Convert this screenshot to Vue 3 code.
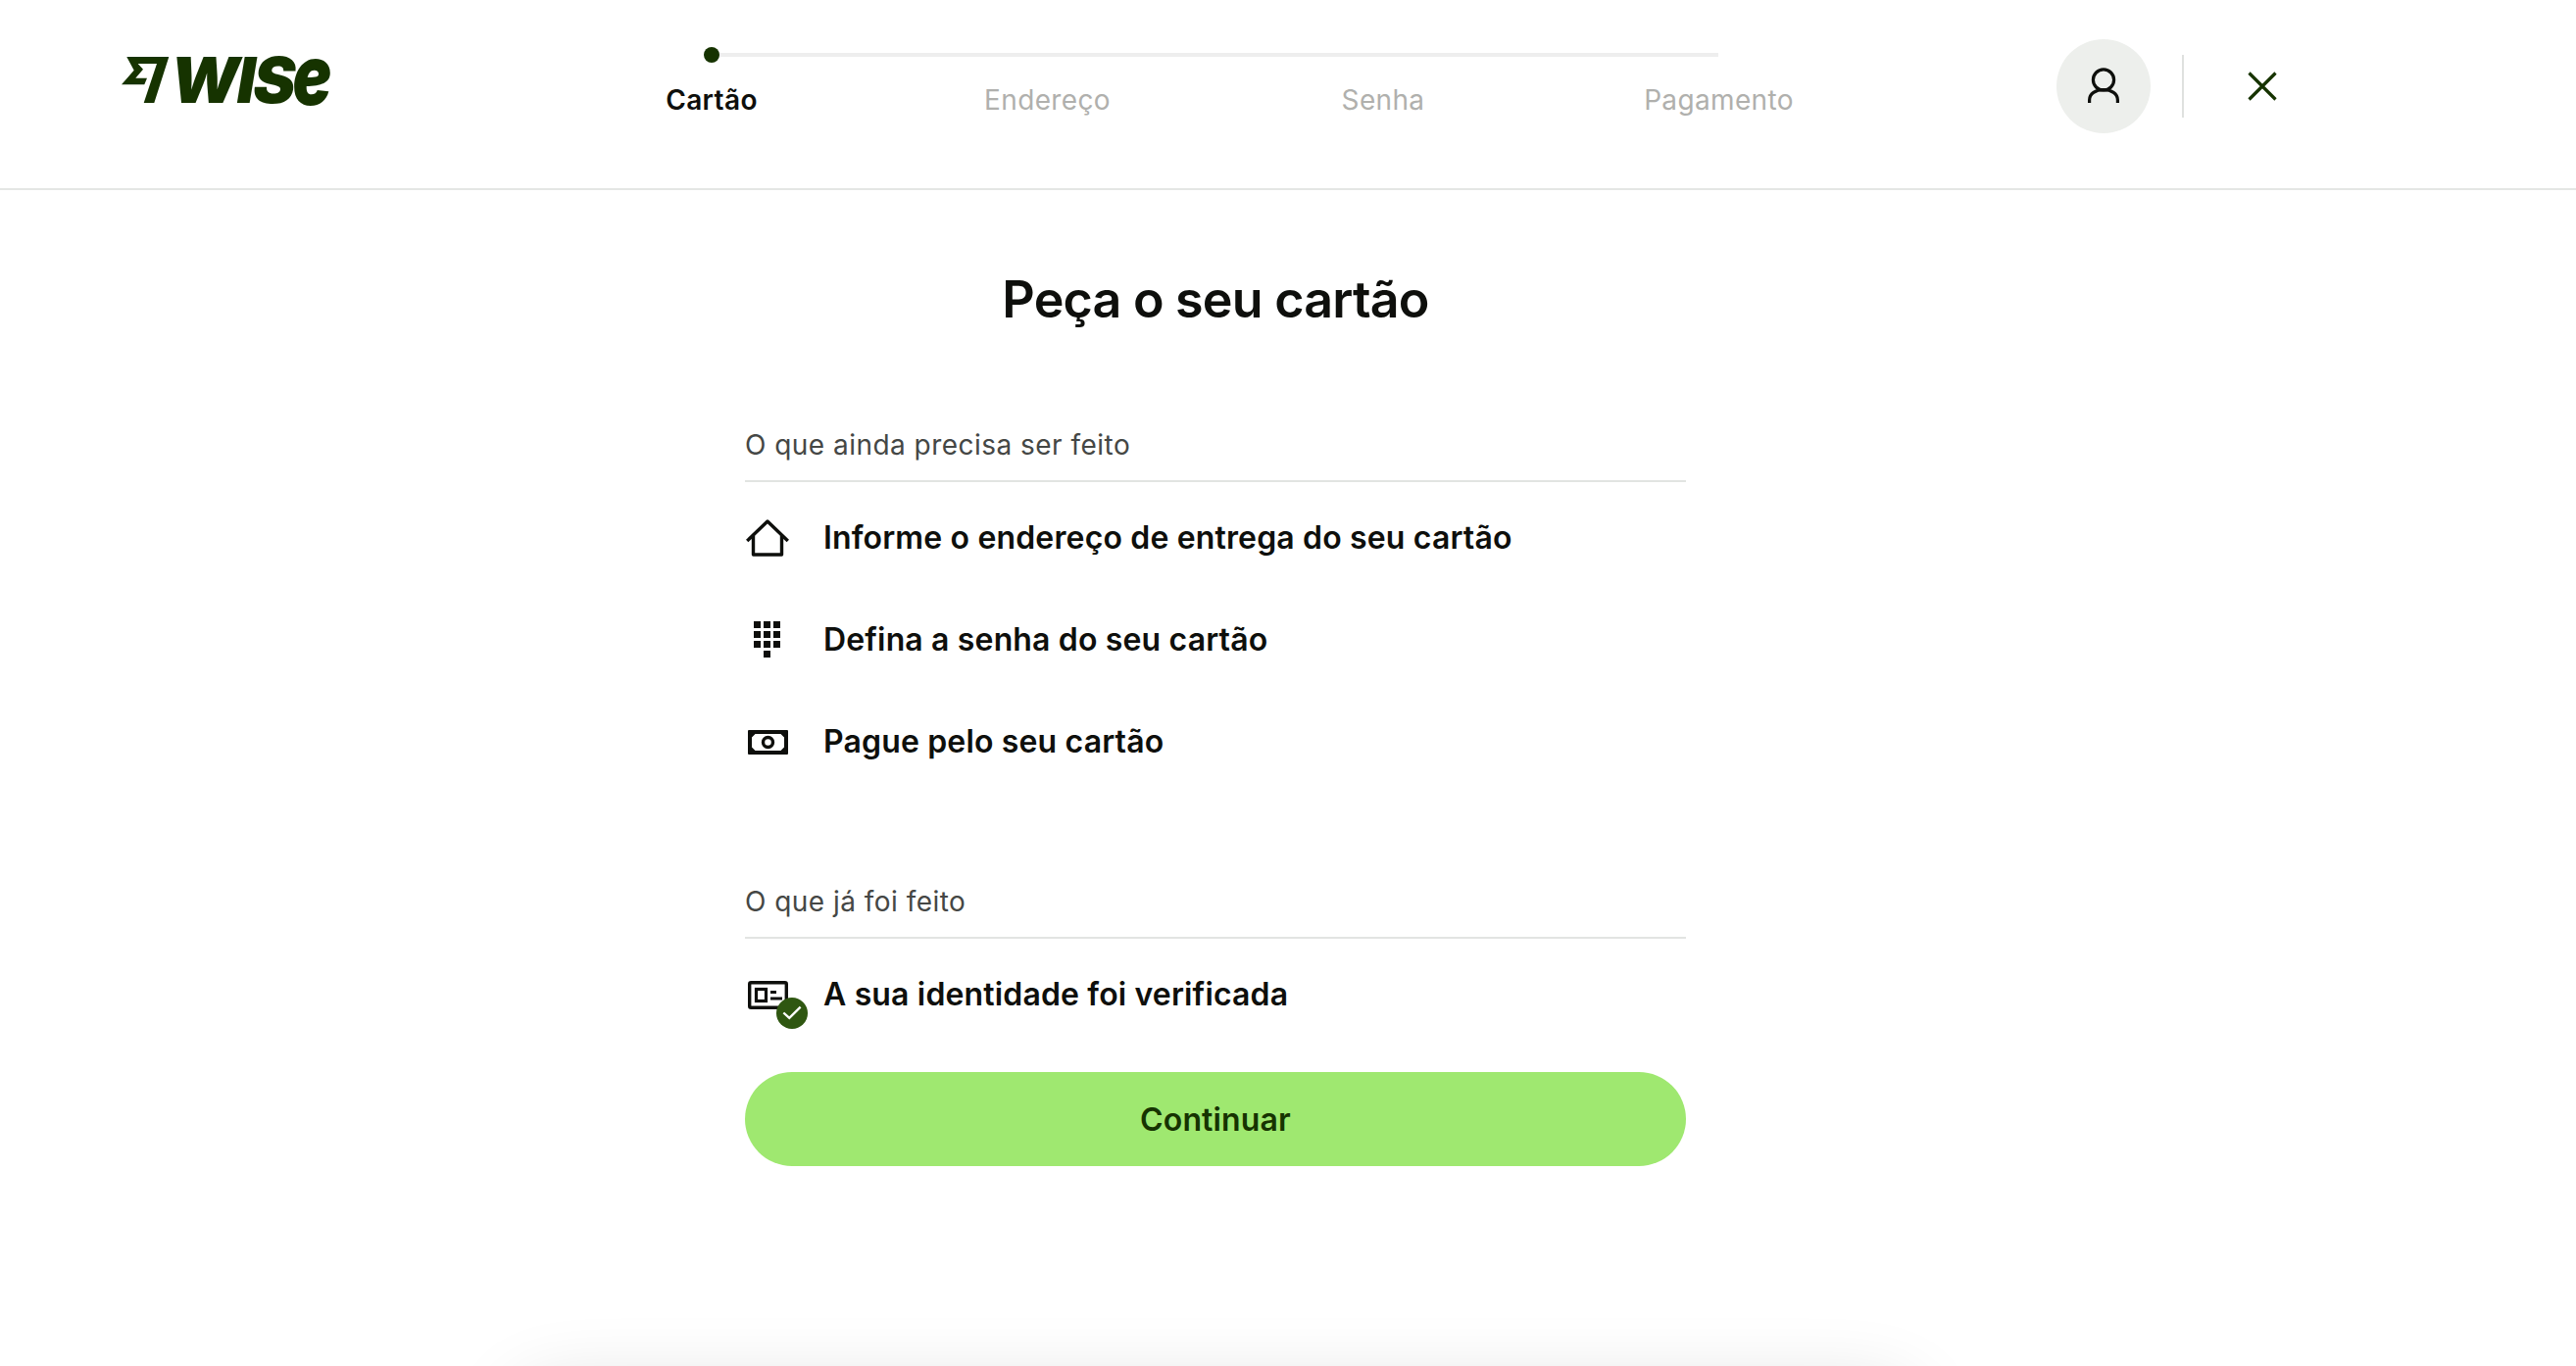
<script setup>
const todo = [
  { icon: 'home', text: 'Informe o endereço de entrega do seu cartão' },
  { icon: 'pad', text: 'Defina a senha do seu cartão' },
  { icon: 'cash', text: 'Pague pelo seu cartão' },
]
const steps = ['Cartão', 'Endereço', 'Senha', 'Pagamento']
const keys = [
  [0, 0], [10, 0], [20, 0],
  [0, 10], [10, 10], [20, 10],
  [0, 20], [10, 20], [20, 20],
  [10, 30],
]
</script>

<template>
  <div class="page">
    <header class="header">
      <div class="logo">
        <svg class="flag" width="49" height="47" viewBox="0 0 49 47">
          <path d="M5.3 0H48.3L33.3 47H22.7L36 7H16.7L22 12.7L14.3 21.7H26L23.3 28.3H0L12.7 13.7Z" fill="#163300" />
        </svg>
        <span class="wordmark">WIS<span class="wordmark-e">e</span></span>
      </div>
      <div class="stepper">
        <div class="track"><span class="dot"></span></div>
        <div class="labels">
          <span v-for="(s, i) in steps" :key="s" class="label" :class="{ active: i === 0 }">{{ s }}</span>
        </div>
      </div>
      <div class="actions">
        <div class="avatar">
          <svg width="32" height="38" viewBox="0 0 32 38" fill="none" stroke="#0e0f0c" stroke-width="3.2">
            <circle cx="16" cy="12.5" r="10.6" />
            <path d="M1.6 36V33C1.6 26.5 8 22.5 16 22.5S30.4 26.5 30.4 33V36" />
          </svg>
        </div>
        <span class="divider"></span>
        <svg class="close" width="30" height="30" viewBox="0 0 30 30" fill="none" stroke="#163300" stroke-width="3.2">
          <path d="M1.5 1.5L28.5 28.5M28.5 1.5L1.5 28.5" />
        </svg>
      </div>
    </header>

    <main class="main">
      <h1 class="title">Peça o seu cartão</h1>
      <section class="section">
        <h2 class="section-title">O que ainda precisa ser feito</h2>
        <ul class="list">
          <li v-for="item in todo" :key="item.icon" class="row">
            <span class="icon">
              <svg v-if="item.icon === 'home'" width="44" height="38" viewBox="0 0 44 38" fill="none" stroke="#0e0f0c" stroke-width="3.4">
                <path d="M1.2 22L22 2L42.8 22M7.5 16.5V36H36.5V16.5" stroke-linejoin="round" />
              </svg>
              <svg v-else-if="item.icon === 'pad'" width="28" height="38" viewBox="0 0 28 38" fill="#0e0f0c">
                <rect v-for="k in keys" :key="k.join()" :x="k[0]" :y="k[1]" width="7" height="7" />
              </svg>
              <svg v-else width="41" height="25" viewBox="0 0 41 25" fill="none">
                <path d="M1 0H40A1 1 0 0 1 41 1V24A1 1 0 0 1 40 25H1A1 1 0 0 1 0 24V1A1 1 0 0 1 1 0ZM7.5 4L4 7.5V17.5L7.5 21H33.5L37 17.5V7.5L33.5 4Z" fill="#0e0f0c" fill-rule="evenodd" />
                <circle cx="20.5" cy="12.5" r="5" stroke="#0e0f0c" stroke-width="3.4" />
              </svg>
            </span>
            <span class="row-text">{{ item.text }}</span>
          </li>
        </ul>
      </section>
      <section class="section done">
        <h2 class="section-title">O que já foi feito</h2>
        <ul class="list">
          <li class="row">
            <span class="icon">
              <svg class="id" width="41" height="29" viewBox="0 0 41 29" fill="none" stroke="#0e0f0c">
                <rect x="1.7" y="1.7" width="37.6" height="25.6" rx="1.5" stroke-width="3.4" />
                <rect x="8.5" y="8.5" width="10" height="12" stroke-width="3.2" />
                <path d="M23 11.5H29M23 18H35" stroke-width="3.2" />
              </svg>
              <span class="check">
                <svg width="20" height="15" viewBox="0 0 22 16" fill="none" stroke="#fff" stroke-width="2.6">
                  <path d="M1.5 8L8 14L20.5 1.5" />
                </svg>
              </span>
            </span>
            <span class="row-text">A sua identidade foi verificada</span>
          </li>
        </ul>
      </section>
      <button class="cta">Continuar</button>
    </main>
    <div class="peek"></div>
  </div>
</template>

<style scoped>
.page {
  position: relative;
  height: 1394px;
  overflow: hidden;
  background: #fff;
  font-family: Inter, "Liberation Sans", sans-serif;
  color: #0e0f0c;
}
.header {
  height: 192px;
  border-bottom: 2px solid #e4e6e4;
  display: flex;
  padding-left: 124px;
}
.logo {
  display: flex;
  align-items: flex-start;
  padding-top: 58px;
  gap: 1px;
  width: 502px;
  flex: none;
}
.flag {
  flex: none;
}
.wordmark {
  font-size: 65px;
  line-height: 47px;
  font-weight: 900;
  font-style: italic;
  color: #163300;
  letter-spacing: -2.5px;
}
.wordmark-e {
  display: inline-block;
  transform: scale(1.02, 1.3);
  transform-origin: 50% 85%;
  letter-spacing: 0;
}
.stepper {
  width: 1200px;
  flex: none;
  padding-top: 54px;
}
.track {
  position: relative;
  height: 4px;
  margin-left: 100px;
  background: #eeeeee;
  width: 1027px;
}
.dot {
  position: absolute;
  left: -8px;
  top: -6px;
  width: 16px;
  height: 16px;
  border-radius: 50%;
  background: #163300;
}
.labels {
  display: grid;
  grid-template-columns: repeat(4, 200px);
  column-gap: 142.5px;
  margin-top: 26px;
}
.label {
  text-align: center;
  font-size: 28px;
  line-height: 36px;
  color: #b0b0ad;
  letter-spacing: 0.35px;
}
.label.active {
  color: #0e0f0c;
  font-weight: 600;
}
.actions {
  margin-left: 272px;
  padding-top: 40px;
  display: flex;
  align-items: center;
  height: 96px;
}
.avatar {
  width: 96px;
  height: 96px;
  border-radius: 50%;
  background: #edefec;
  display: flex;
  align-items: center;
  justify-content: center;
}
.divider {
  width: 2px;
  height: 64px;
  background: #dfe1df;
  margin: 0 65px 0 32px;
}
.main {
  width: 960px;
  margin-left: 760px;
  padding-top: 77px;
}
.title {
  margin: 0;
  font-size: 52px;
  line-height: 70px;
  font-weight: 600;
  text-align: center;
  letter-spacing: -0.8px;
}
.section {
  margin-top: 95px;
}
.section.done {
  margin-top: 93px;
}
.section-title {
  margin: 0;
  font-size: 28px;
  line-height: 36px;
  font-weight: 400;
  color: #454745;
  padding-bottom: 18px;
  border-bottom: 2px solid #e2e4e2;
  letter-spacing: 0.47px;
}
.list {
  list-style: none;
  margin: 0;
  padding: 5px 0 0;
}
.row {
  height: 104px;
  display: flex;
  align-items: center;
}
.icon {
  position: relative;
  width: 80px;
  flex: none;
  padding-right: 34px;
  box-sizing: border-box;
  display: flex;
  justify-content: center;
}
.row-text {
  font-size: 32px;
  font-weight: 600;
  line-height: 40px;
  letter-spacing: 0.15px;
}
.check {
  position: absolute;
  left: 32px;
  top: 17px;
  width: 32px;
  height: 32px;
  border-radius: 50%;
  background: #2f5711;
  display: flex;
  align-items: center;
  justify-content: center;
}
.cta {
  display: block;
  width: 100%;
  height: 96px;
  margin-top: 27px;
  border: 0;
  border-radius: 48px;
  background: #9fe870;
  color: #163300;
  font-family: inherit;
  font-size: 32px;
  font-weight: 600;
  letter-spacing: 0.15px;
}
.peek {
  position: absolute;
  left: 530px;
  width: 1420px;
  top: 1420px;
  height: 200px;
  border-radius: 32px;
  box-shadow: 0 0 80px rgba(0, 0, 0, 0.16);
}
</style>
